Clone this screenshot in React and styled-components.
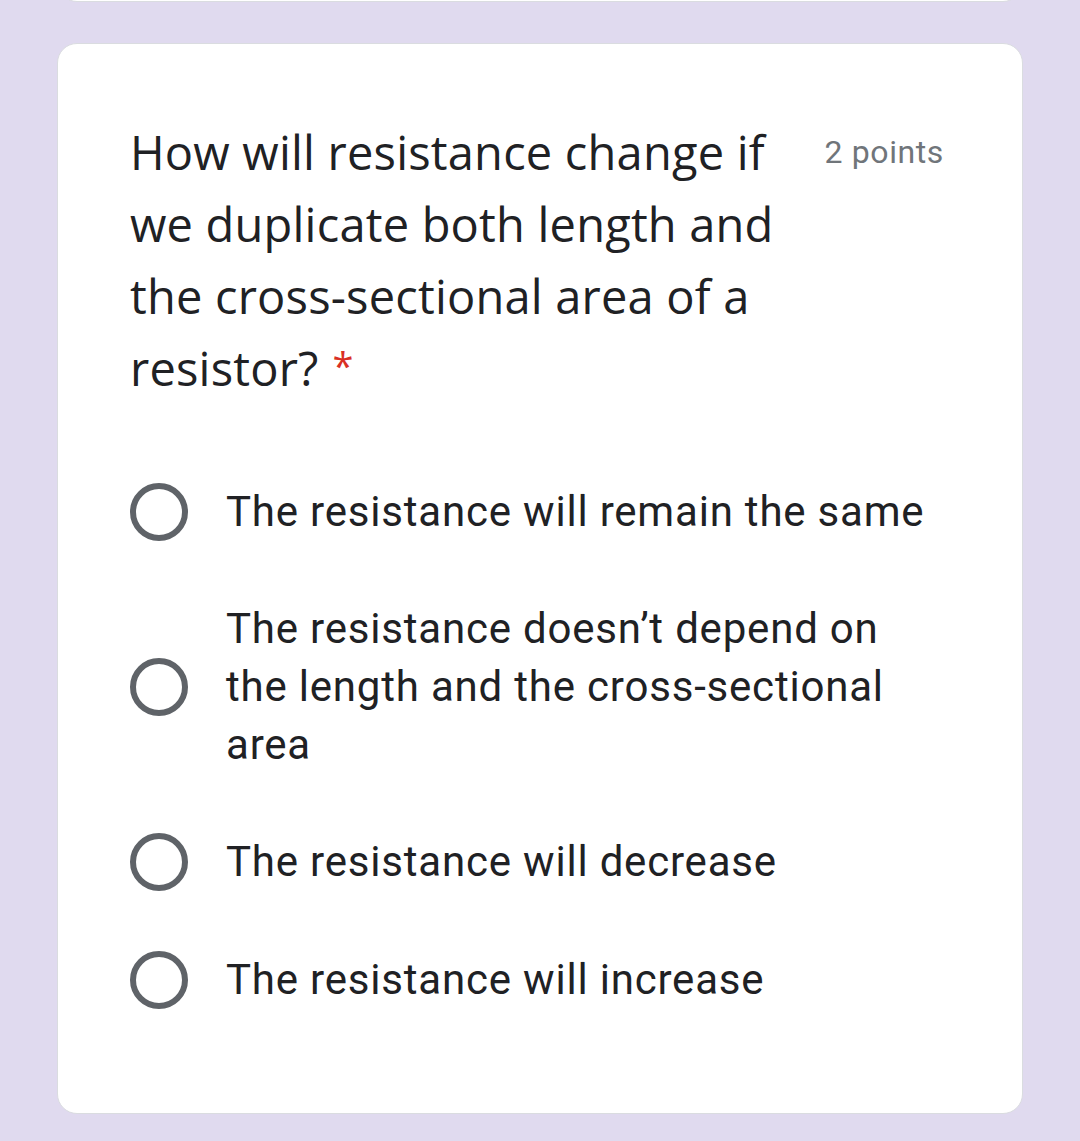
import React from 'react';
import styled, { createGlobalStyle } from 'styled-components';

const GlobalStyle = createGlobalStyle`
  html, body {
    margin: 0;
    background: #e0daef;
  }
  * {
    box-sizing: border-box;
  }
`;

const Page = styled.div`
  display: flex;
  flex-direction: column;
  gap: 41px;
  padding: 0 57px 29px;
  overflow: hidden;
`;

const Card = styled.div`
  background: #fff;
  border: 1px solid #dadce0;
  border-radius: 20px;
`;

// bottom edge of the previous question, scrolled off the top
const PrevCard = styled(Card)`
  height: 40px;
  margin-top: -38px;
`;

const QuestionCard = styled(Card)`
  padding: 72px 72px 74px;
`;

const Header = styled.div`
  display: flex;
  align-items: flex-start;
  justify-content: space-between;
`;

const Title = styled.div`
  flex: 1;
  margin-right: 44px;
  font-family: 'Open Sans', sans-serif;
  font-size: 47px;
  letter-spacing: 0.2px;
  line-height: 72px;
  color: #202124;
`;

// line-height 0 so lifting the star doesn't grow the line box
const Required = styled.span`
  color: #d93025;
  margin-left: 14px;
  font-size: 38px;
  line-height: 0;
  vertical-align: 6px;
`;

const Points = styled.div`
  margin-right: 6px;
  font-family: Roboto, sans-serif;
  font-size: 32px;
  letter-spacing: 0.6px;
  line-height: 72px;
  color: #70757a;
  white-space: nowrap;
`;

const Options = styled.div`
  display: flex;
  flex-direction: column;
  margin-top: 49px;
`;

const Option = styled.label`
  display: flex;
  align-items: center;
  padding: ${({ $multi }) => ($multi ? '29px 0' : '30px 0')};
`;

const Radio = styled.span`
  flex: none;
  width: 58px;
  height: 58px;
  border: 6px solid #5f6368;
  border-radius: 50%;
  margin-right: 38px;
`;

const OptionText = styled.span`
  margin-right: 14px;
  font-family: Roboto, sans-serif;
  font-size: 42px;
  line-height: 58px;
  letter-spacing: 0.8px;
  color: #202124;
`;

const options = [
  'The resistance will remain the same',
  'The resistance doesn’t depend on the length and the cross-sectional area',
  'The resistance will decrease',
  'The resistance will increase',
];

export default function App() {
  return (
    <>
      <GlobalStyle />
      <Page>
        <PrevCard />
        <QuestionCard>
          <Header>
            <Title>
              How will resistance change if we duplicate both length and the cross-sectional area of a resistor?
              <Required>*</Required>
            </Title>
            <Points>2 points</Points>
          </Header>
          <Options>
            {options.map((text) => (
              <Option key={text} $multi={text.length > 40}>
                <Radio />
                <OptionText>{text}</OptionText>
              </Option>
            ))}
          </Options>
        </QuestionCard>
      </Page>
    </>
  );
}
